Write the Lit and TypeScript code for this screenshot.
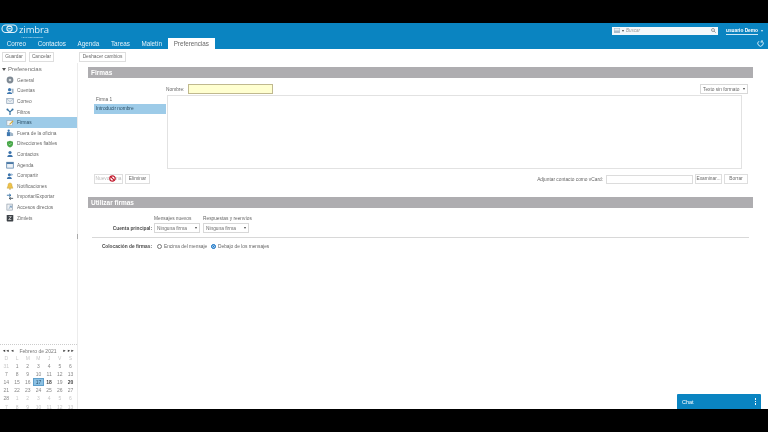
import { LitElement, html, css, svg } from "lit";
import { customElement } from "lit/decorators.js";

const ICONS: Record<string, unknown> = {
  general: svg`<circle cx="4.5" cy="4.5" r="3.8" fill="#7f8a94"/><circle cx="4.5" cy="4.5" r="1.5" fill="#d5dade"/>`,
  cuentas: svg`<circle cx="4" cy="3" r="1.8" fill="#3f78b0"/><path d="M1 8c0-3 6-3 6 0z" fill="#3f78b0"/><path d="M6 2h2.5v5H7z" fill="#9fb4c6"/>`,
  correo: svg`<rect x=".8" y="1.8" width="7.4" height="5.6" fill="#e9eef3" stroke="#8fa4b8" stroke-width=".8"/><path d="M1 2.2l3.5 3 3.5-3" fill="none" stroke="#8fa4b8" stroke-width=".6"/>`,
  filtros: svg`<path d="M1.5 1.5L4.5 4.5L7.5 1.5M4.5 4.5V8" fill="none" stroke="#34709f" stroke-width="1.3"/><circle cx="1.6" cy="1.6" r="1.1" fill="#34709f"/><circle cx="7.4" cy="1.6" r="1.1" fill="#34709f"/>`,
  firmas: svg`<rect x="1" y="1.5" width="6" height="6" fill="#f1f4f7" stroke="#94a6b6" stroke-width=".7"/><path d="M4 6l4-4" stroke="#d9a92a" stroke-width="1.2"/>`,
  fuera: svg`<rect x="1" y="3.5" width="4" height="4.5" fill="#3f78b0"/><path d="M5 3.5l3 1.5v3H5z" fill="#9fb4c6"/><circle cx="3" cy="2" r="1.3" fill="#3f78b0"/>`,
  direcciones: svg`<path d="M4.5 .8l3.4 1.2v2.6c0 2-1.6 3.2-3.4 3.8-1.8-.6-3.4-1.8-3.4-3.8V2z" fill="#49a84a"/><path d="M3 4.2l1.2 1.2 2-2" stroke="#d6f0d4" stroke-width=".7" fill="none"/>`,
  contactos: svg`<circle cx="4.5" cy="2.8" r="1.8" fill="#3c73ab"/><path d="M1.4 8c0-3.6 6.2-3.6 6.2 0z" fill="#3c73ab"/>`,
  agenda: svg`<rect x=".8" y="1.4" width="7.4" height="6.6" fill="#eef2f6" stroke="#4b79a6" stroke-width=".8"/><rect x=".8" y="1.4" width="7.4" height="2" fill="#4b79a6"/>`,
  compartir: svg`<circle cx="3.8" cy="3" r="1.7" fill="#3c73ab"/><path d="M1 8c0-3.4 5.6-3.4 5.6 0z" fill="#3c73ab"/><path d="M6 1.5l2 1.5-2 1.5z" fill="#7ba3c8"/>`,
  notificaciones: svg`<path d="M4.5 1c1.8 0 2.3 1.5 2.3 3.2L7.8 7H1.2l1-2.8C2.2 2.5 2.7 1 4.5 1z" fill="#eec24a" stroke="#b8922c" stroke-width=".4"/><circle cx="4.5" cy="7.8" r=".8" fill="#b8922c"/>`,
  importar: svg`<path d="M1 2.5h4.5M3.5 1l2 1.5-2 1.5" stroke="#2f6ea5" stroke-width="1" fill="none"/><path d="M8 6H3.5M5.5 4.5l-2 1.5 2 1.5" stroke="#43525f" stroke-width="1" fill="none"/>`,
  accesos: svg`<rect x="1" y="1.2" width="6.5" height="6.8" fill="#eef1f4" stroke="#8b99a7" stroke-width=".7"/><path d="M3 6.5l3-3M4 3.5h2v2" stroke="#4b79a6" stroke-width=".7" fill="none"/>`,
  zimlets: svg`<rect x=".8" y="1" width="7.4" height="7.4" rx=".8" fill="#3d4247"/><path d="M3 3h3L3 6.2h3" stroke="#e8e8e8" stroke-width=".8" fill="none"/>`,
};

const NAV: [string, string][] = [
  ["general", "General"],
  ["cuentas", "Cuentas"],
  ["correo", "Correo"],
  ["filtros", "Filtros"],
  ["firmas", "Firmas"],
  ["fuera", "Fuera de la oficina"],
  ["direcciones", "Direcciones fiables"],
  ["contactos", "Contactos"],
  ["agenda", "Agenda"],
  ["compartir", "Compartir"],
  ["notificaciones", "Notificaciones"],
  ["importar", "Importar/Exportar"],
  ["accesos", "Accesos directos"],
  ["zimlets", "Zimlets"],
];

const TABS = ["Correo", "Contactos", "Agenda", "Tareas", "Maletín", "Preferencias"];

const CAL: [string, string][] = [
  ["31", "off"],
  ...Array.from({ length: 28 }, (_, i) => {
    const d = i + 1;
    const c = d === 17 ? "sel" : d === 18 || d === 20 ? "bold" : "";
    return [String(d), c] as [string, string];
  }),
  ...Array.from({ length: 13 }, (_, i) => [String(i + 1), "off"] as [string, string]),
];

@customElement("app-root")
export class AppRoot extends LitElement {
  static styles = css`
    :host {
      display: block;
      width: 768px;
      height: 432px;
      background: #000;
      padding: 23px 0;
      box-sizing: border-box;
      font-family: "Liberation Sans", Arial, sans-serif;
      font-size: 4.8px;
      color: #666;
      overflow: hidden;
    }
    .page {
      position: relative;
      height: 386px;
      background: #fff;
      display: flex;
      flex-direction: column;
      overflow: hidden;
      filter: blur(0.3px);
    }
    .top {
      height: 26px;
      background: #0a84c1;
      flex: none;
      display: flex;
      flex-direction: column;
    }
    .top-row {
      height: 15px;
      display: flex;
      align-items: center;
      padding: 0 4px 0 1px;
    }
    .logo {
      display: flex;
      align-items: flex-start;
      align-self: flex-start;
      height: 15px;
      color: #e4f2fa;
    }
    .logo-text {
      display: flex;
      flex-direction: column;
    }
    .logo-name {
      font-family: "Open Sans", sans-serif;
      font-size: 9.5px;
      line-height: 13px;
      letter-spacing: -0.1px;
    }
    .logo-sub {
      font-size: 2px;
      line-height: 2px;
      padding-left: 2px;
      white-space: nowrap;
    }
    .search {
      margin-left: auto;
      width: 106px;
      height: 8px;
      background: #f3f8fb;
      display: flex;
      align-items: center;
      padding: 0 2px;
      gap: 2px;
      color: #999;
      font-size: 4.5px;
      font-style: italic;
      box-sizing: border-box;
    }
    .search .q {
      margin-left: auto;
    }
    .caret {
      width: 0;
      height: 0;
      border-left: 1.5px solid transparent;
      border-right: 1.5px solid transparent;
      border-top: 2px solid #444;
      flex: none;
    }
    .user {
      margin-left: 8px;
      color: #fff;
      font-weight: 700;
      font-size: 4.8px;
      display: flex;
      align-items: center;
      gap: 3px;
      width: 38px;
      box-sizing: border-box;
      white-space: nowrap;
    }
    .user span {
      border-bottom: 1px solid #cfe8f6;
      line-height: 7px;
    }
    .user .caret {
      border-top-color: #d9eef9;
    }
    .tabs {
      height: 11px;
      display: flex;
      padding-left: 1px;
    }
    .tab {
      color: #e4f2fa;
      font-size: 6.3px;
      padding: 0 5.8px;
      line-height: 12px;
      white-space: nowrap;
    }
    .tab.on {
      background: #fff;
      color: #666;
    }
    .refresh {
      margin-left: auto;
      margin-right: 4px;
      align-self: center;
      display: block;
    }
    .toolbar {
      height: 14px;
      flex: none;
      display: flex;
      align-items: flex-start;
      padding: 3px 0 0 2px;
      box-sizing: border-box;
    }
    .btn {
      height: 10px;
      border: 1px solid #dedede;
      background: #fff;
      box-sizing: border-box;
      font-size: 4.8px;
      line-height: 8px;
      color: #6a6a6a;
      display: flex;
      align-items: center;
      justify-content: center;
      white-space: nowrap;
      flex: none;
    }
    .body {
      flex: 1;
      display: flex;
      min-height: 0;
    }
    .side {
      width: 77px;
      flex: none;
      border-right: 1px solid #ececec;
      display: flex;
      flex-direction: column;
      position: relative;
    }
    .side-head {
      display: flex;
      align-items: center;
      gap: 2px;
      height: 12px;
      padding-left: 2px;
      font-size: 6px;
      color: #707070;
    }
    .tri {
      width: 0;
      height: 0;
      border-left: 2px solid transparent;
      border-right: 2px solid transparent;
      border-top: 3px solid #555;
    }
    .nav {
      height: 10.6px;
      display: flex;
      align-items: center;
      gap: 3px;
      padding-left: 6px;
      white-space: nowrap;
      flex: none;
      color: #6a6a6a;
    }
    .nav.on {
      background: #9dcbe8;
      color: #2c4f66;
    }
    .nav svg {
      width: 8px;
      height: 8px;
      flex: none;
    }
    .handle {
      position: absolute;
      right: -1px;
      top: 171px;
      width: 1px;
      height: 5px;
      background: #aaa;
    }
    .cal {
      margin-top: auto;
      border-top: 1px dotted #ccc;
      height: 65px;
      box-sizing: border-box;
      padding: 2px 0 0 1px;
      flex: none;
      overflow: hidden;
      color: #888;
    }
    .cal-head {
      display: flex;
      align-items: center;
      height: 7px;
      font-size: 5px;
      padding: 0 1px;
      color: #777;
      justify-content: space-between;
      width: 74px;
      box-sizing: border-box;
    }
    .cal-head b {
      font-size: 4px;
      color: #333;
      letter-spacing: -0.5px;
    }
    .grid {
      display: grid;
      grid-template-columns: repeat(7, 10.7px);
      grid-auto-rows: 8.1px;
      font-size: 5px;
      text-align: center;
      line-height: 8.1px;
    }
    .grid .dow, .grid .off {
      color: #c8c8c8;
    }
    .grid .bold {
      font-weight: 700;
      color: #444;
    }
    .grid .sel {
      background: #8cc1e4;
      border: 1px solid #5f9fcb;
      box-sizing: border-box;
      line-height: 6.1px;
      color: #2c5470;
    }
    .main {
      flex: 1;
      min-width: 0;
      padding: 4px 15px 0 10px;
      display: flex;
      flex-direction: column;
    }
    .bar {
      height: 11px;
      background: #aeadb0;
      color: #fff;
      font-weight: 700;
      font-size: 6.5px;
      line-height: 11px;
      padding-left: 3px;
      flex: none;
    }
    .editor {
      margin: 6px 5px 0 6px;
      display: flex;
      height: 85px;
      flex: none;
    }
    .list {
      width: 72px;
      flex: none;
      padding-top: 10px;
    }
    .list div {
      height: 10px;
      line-height: 10px;
      padding-left: 2px;
      white-space: nowrap;
    }
    .list .first {
      line-height: 12px;
    }
    .list .sel {
      background: #9dcbe8;
      color: #2c4f66;
    }
    .edit-col {
      flex: 1;
      min-width: 0;
      display: flex;
      flex-direction: column;
      margin-left: 1px;
    }
    .name-row {
      height: 11px;
      display: flex;
      align-items: flex-start;
      flex: none;
    }
    .name-row label {
      margin-left: -1px;
      width: 22px;
      flex: none;
      line-height: 12px;
    }
    .name {
      width: 85px;
      height: 10px;
      background: #ffffd0;
      border: 1px solid #c0b98f;
      box-sizing: border-box;
    }
    .select {
      height: 10px;
      border: 1px solid #d8d8d8;
      background: #fff;
      box-sizing: border-box;
      display: flex;
      align-items: center;
      justify-content: space-between;
      padding: 0 2px;
      font-size: 4.8px;
      color: #6a6a6a;
      white-space: nowrap;
      flex: none;
    }
    .fmt {
      margin-left: auto;
      width: 48px;
    }
    .textarea {
      width: 575px;
      height: 74px;
      border: 1px solid #e2e2e2;
      box-sizing: border-box;
      flex: none;
    }
    .actions {
      margin: 5px 5px 0 6px;
      display: flex;
      align-items: center;
      gap: 2px;
      height: 10px;
      flex: none;
    }
    .disabled {
      color: #bbb;
      position: relative;
    }
    .cursor {
      position: absolute;
      left: 14px;
      top: 0;
      width: 7px;
      height: 7px;
    }
    .vcard {
      margin-left: auto;
      white-space: nowrap;
      margin-right: 1px;
    }
    .field {
      width: 87px;
      height: 9px;
      border: 1px solid #dcdcdc;
      box-sizing: border-box;
      flex: none;
    }
    .bar2 {
      margin-top: 13px;
    }
    .prefs {
      display: grid;
      grid-template-columns: 63px 46px 46px;
      column-gap: 3px;
      padding-top: 7px;
      align-items: center;
      white-space: nowrap;
      flex: none;
    }
    .prefs .h {
      height: 8px;
      line-height: 8px;
    }
    .prefs .lbl {
      font-weight: 700;
      color: #4a4a4a;
      text-align: right;
      margin-right: -1px;
    }
    .hr {
      height: 1px;
      background: #d8d8d8;
      margin: 4px 4px 0 4px;
      flex: none;
    }
    .place {
      display: flex;
      align-items: center;
      height: 11px;
      margin-top: 3px;
      white-space: nowrap;
      flex: none;
    }
    .place .lbl {
      width: 64px;
      text-align: right;
      font-weight: 700;
      color: #4a4a4a;
      flex: none;
    }
    .radio {
      width: 5px;
      height: 5px;
      border-radius: 50%;
      border: 0.7px solid #777;
      box-sizing: border-box;
      flex: none;
      margin: 0 2px 0 5px;
    }
    .radio.on {
      background: #1a76c7;
      border-color: #1a76c7;
      box-shadow: inset 0 0 0 0.6px #fff;
      margin-left: 0;
    }
    .place .t1 {
      width: 47px;
      flex: none;
    }
    .chat {
      position: absolute;
      right: 7px;
      bottom: 0;
      width: 84px;
      height: 15px;
      background: #0a84c1;
      border-radius: 1px 1px 0 0;
      color: #fff;
      display: flex;
      align-items: center;
      justify-content: space-between;
      padding: 0 5px;
      box-sizing: border-box;
      font-size: 5.5px;
    }
    .dots {
      display: flex;
      flex-direction: column;
      gap: 1px;
    }
    .dots i {
      width: 1.5px;
      height: 1.5px;
      background: #fff;
      display: block;
    }
  `;

  private sel(text: string, width: number) {
    return html`<div class="select" style="width:${width}px">${text}<i class="caret"></i></div>`;
  }

  render() {
    return html`<div class="page">
      <div class="top">
        <div class="top-row">
          <div class="logo">
            <svg width="18" height="11" viewBox="0 0 18 11" fill="none" stroke="#e4f2fa" stroke-width="1.1">
              <rect x="1" y="2" width="15" height="7.5" rx="3.7"/>
              <circle cx="8.5" cy="5.7" r="2.6"/>
              <path d="M7.2 5.7h2.6"/>
            </svg>
            <div class="logo-text">
              <span class="logo-name">zimbra</span>
              <span class="logo-sub">A SYNACOR PRODUCT</span>
            </div>
          </div>
          <div class="search">
            <svg width="6" height="5" viewBox="0 0 6 5"><rect width="6" height="5" fill="#a9bccb"/><rect x=".5" y=".5" width="5" height="2" fill="#e6edf2"/></svg>
            <i class="caret"></i>
            <span>Buscar</span>
            <svg class="q" width="5" height="5" viewBox="0 0 5 5" fill="none" stroke="#777" stroke-width=".7"><circle cx="2" cy="2" r="1.5"/><path d="M3 3l1.7 1.7"/></svg>
          </div>
          <div class="user"><span>usuario Demo</span><i class="caret"></i></div>
        </div>
        <div class="tabs">
          ${TABS.map((t) => html`<div class="tab ${t === "Preferencias" ? "on" : ""}">${t}</div>`)}
          <svg class="refresh" width="7" height="7" viewBox="0 0 7 7" fill="none" stroke="#cfe8f6" stroke-width="1"><path d="M2 1.2A2.7 2.7 0 1 0 5 1.2"/><path d="M5 0v2H3.5"/></svg>
        </div>
      </div>
      <div class="toolbar">
        <div class="btn" style="width:24px">Guardar</div>
        <div class="btn" style="width:25px;margin-left:3px">Cancelar</div>
        <div class="btn" style="width:47px;margin-left:25px">Deshacer cambios</div>
      </div>
      <div class="body">
        <aside class="side">
          <div class="side-head"><i class="tri"></i>Preferencias</div>
          ${NAV.map(
            ([id, label]) => html`<div class="nav ${id === "firmas" ? "on" : ""}">
              <svg viewBox="0 0 9 9">${ICONS[id]}</svg>${label}
            </div>`
          )}
          <i class="handle"></i>
          <div class="cal">
            <div class="cal-head">
              <b>◄◄&nbsp;&nbsp;◄</b><span>Febrero de 2021</span><b>►&nbsp;&nbsp;►►</b>
            </div>
            <div class="grid">
              ${["D", "L", "M", "M", "J", "V", "S"].map((d) => html`<span class="dow">${d}</span>`)}
              ${CAL.map(([d, c]) => html`<span class=${c}>${d}</span>`)}
            </div>
          </div>
        </aside>
        <main class="main">
          <div class="bar">Firmas</div>
          <div class="editor">
            <div class="list">
              <div class="first">Firma 1</div>
              <div class="sel">Introducir nombre</div>
            </div>
            <div class="edit-col">
              <div class="name-row">
                <label>Nombre:</label>
                <div class="name"></div>
                <div class="select fmt">Texto sin formato<i class="caret"></i></div>
              </div>
              <div class="textarea"></div>
            </div>
          </div>
          <div class="actions">
            <div class="btn disabled" style="width:29px">Nuevo firma
              <svg class="cursor" viewBox="0 0 7 7" fill="none" stroke="#c2182b" stroke-width="1.2"><circle cx="3.5" cy="3.5" r="2.7" fill="#fff"/><path d="M1.6 1.6l3.8 3.8"/></svg>
            </div>
            <div class="btn" style="width:25px">Eliminar</div>
            <span class="vcard">Adjuntar contacto como vCard:</span>
            <div class="field"></div>
            <div class="btn" style="width:27px">Examinar...</div>
            <div class="btn" style="width:24px">Borrar</div>
          </div>
          <div class="bar bar2">Utilizar firmas</div>
          <div class="prefs">
            <span></span><span class="h">Mensajes nuevos</span><span class="h">Respuestas y reenvíos</span>
            <span class="lbl">Cuenta principal:</span>
            ${this.sel("Ninguna firma", 46)}
            ${this.sel("Ninguna firma", 46)}
          </div>
          <div class="hr"></div>
          <div class="place">
            <span class="lbl">Colocación de firmas:</span>
            <i class="radio"></i><span class="t1">Encima del mensaje</span>
            <i class="radio on"></i><span>Debajo de los mensajes</span>
          </div>
        </main>
      </div>
      <div class="chat">Chat<span class="dots"><i></i><i></i><i></i></span></div>
    </div>`;
  }
}
